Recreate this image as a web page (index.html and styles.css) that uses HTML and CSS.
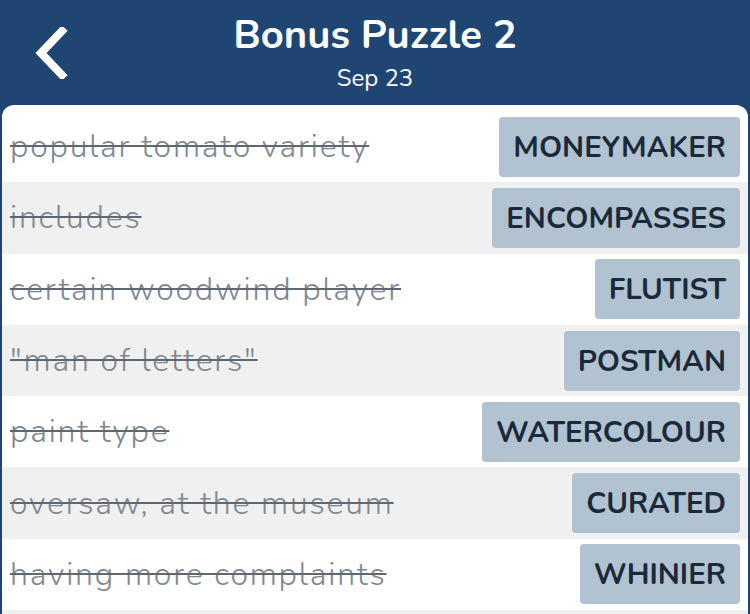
FILE: index.html
```html
<!DOCTYPE html>
<html>
<head>
<meta charset="utf-8">
<link rel="stylesheet" href="styles.css">
</head>
<body>
<div class="app">
  <header class="header">
    <button class="back" aria-label="Back">
      <svg width="36" height="52" viewBox="0 0 36 52"><path d="M29 4 L8 26 L29 48" fill="none" stroke="#fff" stroke-width="8" stroke-linecap="square" stroke-linejoin="miter"/></svg>
    </button>
    <div class="titles">
      <div class="title">Bonus Puzzle 2</div>
      <div class="subtitle">Sep 23</div>
    </div>
  </header>
  <main class="panel">
    <div class="row"><span class="clue">popular tomato variety</span><span class="answer">MONEYMAKER</span></div>
    <div class="row alt"><span class="clue">includes</span><span class="answer">ENCOMPASSES</span></div>
    <div class="row"><span class="clue">certain woodwind player</span><span class="answer">FLUTIST</span></div>
    <div class="row alt"><span class="clue">"man of letters"</span><span class="answer">POSTMAN</span></div>
    <div class="row"><span class="clue">paint type</span><span class="answer">WATERCOLOUR</span></div>
    <div class="row alt"><span class="clue">oversaw, at the museum</span><span class="answer">CURATED</span></div>
    <div class="row"><span class="clue">having more complaints</span><span class="answer">WHINIER</span></div>
    <div class="row alt"></div>
  </main>
</div>
</body>
</html>
```
FILE: styles.css
```css
* { box-sizing: border-box; }
html, body { margin: 0; padding: 0; }
body {
  width: 750px;
  height: 614px;
  overflow: hidden;
  background: #1f4673;
  font-family: "Nunito", "Lato", "Open Sans", sans-serif;
}
.app { display: flex; flex-direction: column; height: 614px; }
.header {
  height: 105px;
  flex: none;
  display: flex;
  align-items: flex-start;
  position: relative;
  color: #fff;
}
.back {
  position: absolute;
  left: 33px;
  top: 27px;
  background: none;
  border: 0;
  padding: 0;
  width: 40px;
  height: 54px;
  display: flex;
}
.titles {
  flex: 1;
  display: flex;
  flex-direction: column;
  align-items: center;
  padding-top: 10px;
}
.title {
  font-size: 40px;
  font-weight: 700;
  line-height: 50px;
}
.subtitle {
  font-size: 24px;
  line-height: 33px;
  margin-top: 2px;
}
.panel {
  flex: 1;
  background: #fff;
  margin: 0 2px;
  border-radius: 12px 12px 0 0;
  padding-top: 6px;
  overflow: hidden;
}
.row {
  height: 71.3px;
  display: flex;
  align-items: center;
  justify-content: space-between;
  padding: 0 8px 0 8px;
}
.row.alt { background: #f0f0f0; }
.clue {
  font-size: 32px;
  font-weight: 300;
  letter-spacing: 1.8px;
  color: #7f8891;
  text-decoration: line-through;
  text-decoration-color: #5f6872;
  text-decoration-thickness: 1.5px;
}
.answer {
  height: 60px;
  display: flex;
  align-items: center;
  padding: 0 14px;
  background: #b1c2d1;
  color: #1b2a3a;
  font-weight: 700;
  font-size: 29.5px;
  border-radius: 4px;
}
```
